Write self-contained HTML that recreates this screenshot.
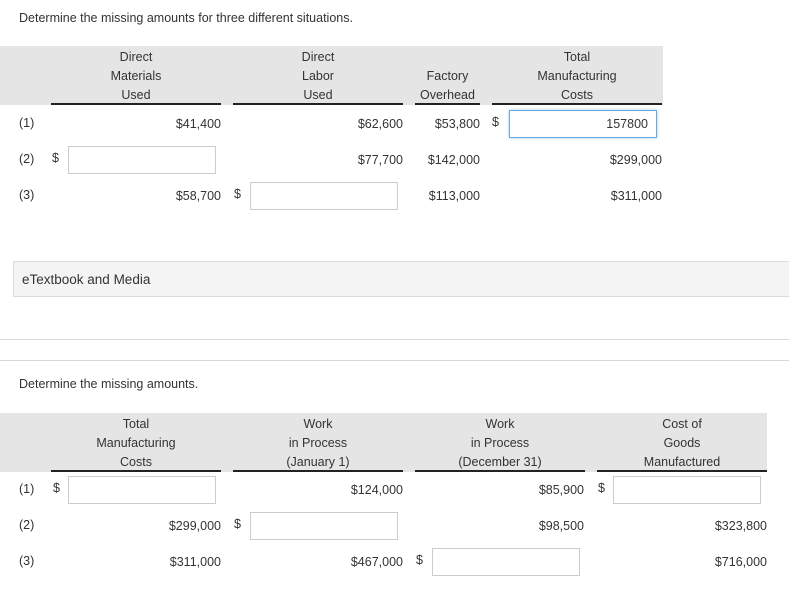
<!DOCTYPE html>
<html><head><meta charset="utf-8"><style>
body{margin:0;width:789px;height:591px;position:relative;background:#fff;font-family:"Liberation Sans",sans-serif;font-size:12.5px;color:#333;overflow:hidden}
.a{position:absolute;white-space:nowrap}
.g{position:absolute;background:#e5e5e5}
.h{position:absolute;text-align:center;line-height:19px;font-size:12.5px}
.l{position:absolute;height:2px;background:#222}
.r{position:absolute;text-align:right;line-height:16px}
.in{position:absolute;border:1px solid #ccc;background:#fff;box-sizing:border-box;width:148px;height:28px}
.hr{position:absolute;left:0;width:789px;height:1px;background:#d8d8d8}
</style></head><body>
<div class="a" style="left:19px;top:11px">Determine the missing amounts for three different situations.</div>

<div class="g" style="left:0;top:46px;width:663px;height:59px"></div>
<div class="h" style="left:51px;top:48px;width:170px">Direct<br>Materials<br>Used</div>
<div class="h" style="left:233px;top:48px;width:170px">Direct<br>Labor<br>Used</div>
<div class="h" style="left:415px;top:67px;width:65px">Factory<br>Overhead</div>
<div class="h" style="left:492px;top:48px;width:170px">Total<br>Manufacturing<br>Costs</div>
<div class="l" style="left:51px;top:103px;width:170px"></div>
<div class="l" style="left:233px;top:103px;width:170px"></div>
<div class="l" style="left:415px;top:103px;width:65px"></div>
<div class="l" style="left:492px;top:103px;width:170px"></div>

<div class="a" style="left:19px;top:116px">(1)</div>
<div class="r" style="left:100px;top:116px;width:121px">$41,400</div>
<div class="r" style="left:282px;top:116px;width:121px">$62,600</div>
<div class="r" style="left:400px;top:116px;width:80px">$53,800</div>
<div class="a" style="left:492px;top:115px">$</div>
<div class="in" style="left:509px;top:110px;border-color:#6aa8e0;box-shadow:0 0 3px #9cc7ef;text-align:right;padding:5px 8px;line-height:16px">157800</div>

<div class="a" style="left:19px;top:152px">(2)</div>
<div class="a" style="left:52px;top:151px">$</div>
<div class="in" style="left:68px;top:146px"></div>
<div class="r" style="left:282px;top:152px;width:121px">$77,700</div>
<div class="r" style="left:400px;top:152px;width:80px">$142,000</div>
<div class="r" style="left:540px;top:152px;width:122px">$299,000</div>

<div class="a" style="left:19px;top:188px">(3)</div>
<div class="r" style="left:100px;top:188px;width:121px">$58,700</div>
<div class="a" style="left:234px;top:187px">$</div>
<div class="in" style="left:250px;top:182px"></div>
<div class="r" style="left:400px;top:188px;width:80px">$113,000</div>
<div class="r" style="left:540px;top:188px;width:122px">$311,000</div>

<div class="a" style="left:13px;top:261px;width:780px;height:36px;background:#f4f4f4;border:1px solid #dcdcdc;box-sizing:border-box"></div>
<div class="a" style="left:22px;top:272px;font-size:13.5px">eTextbook and Media</div>

<div class="hr" style="top:339px"></div>
<div class="hr" style="top:360px"></div>

<div class="a" style="left:19px;top:377px">Determine the missing amounts.</div>

<div class="g" style="left:0;top:413px;width:767px;height:59px"></div>
<div class="h" style="left:51px;top:415px;width:170px">Total<br>Manufacturing<br>Costs</div>
<div class="h" style="left:233px;top:415px;width:170px">Work<br>in Process<br>(January 1)</div>
<div class="h" style="left:415px;top:415px;width:170px">Work<br>in Process<br>(December 31)</div>
<div class="h" style="left:597px;top:415px;width:170px">Cost of<br>Goods<br>Manufactured</div>
<div class="l" style="left:51px;top:470px;width:170px"></div>
<div class="l" style="left:233px;top:470px;width:170px"></div>
<div class="l" style="left:415px;top:470px;width:170px"></div>
<div class="l" style="left:597px;top:470px;width:170px"></div>

<div class="a" style="left:19px;top:482px">(1)</div>
<div class="a" style="left:53px;top:481px">$</div>
<div class="in" style="left:68px;top:476px"></div>
<div class="r" style="left:282px;top:482px;width:121px">$124,000</div>
<div class="r" style="left:463px;top:482px;width:121px">$85,900</div>
<div class="a" style="left:598px;top:481px">$</div>
<div class="in" style="left:613px;top:476px"></div>

<div class="a" style="left:19px;top:518px">(2)</div>
<div class="r" style="left:100px;top:518px;width:121px">$299,000</div>
<div class="a" style="left:234px;top:517px">$</div>
<div class="in" style="left:250px;top:512px"></div>
<div class="r" style="left:463px;top:518px;width:121px">$98,500</div>
<div class="r" style="left:646px;top:518px;width:121px">$323,800</div>

<div class="a" style="left:19px;top:554px">(3)</div>
<div class="r" style="left:100px;top:554px;width:121px">$311,000</div>
<div class="r" style="left:282px;top:554px;width:121px">$467,000</div>
<div class="a" style="left:416px;top:553px">$</div>
<div class="in" style="left:432px;top:548px"></div>
<div class="r" style="left:646px;top:554px;width:121px">$716,000</div>
</body></html>
